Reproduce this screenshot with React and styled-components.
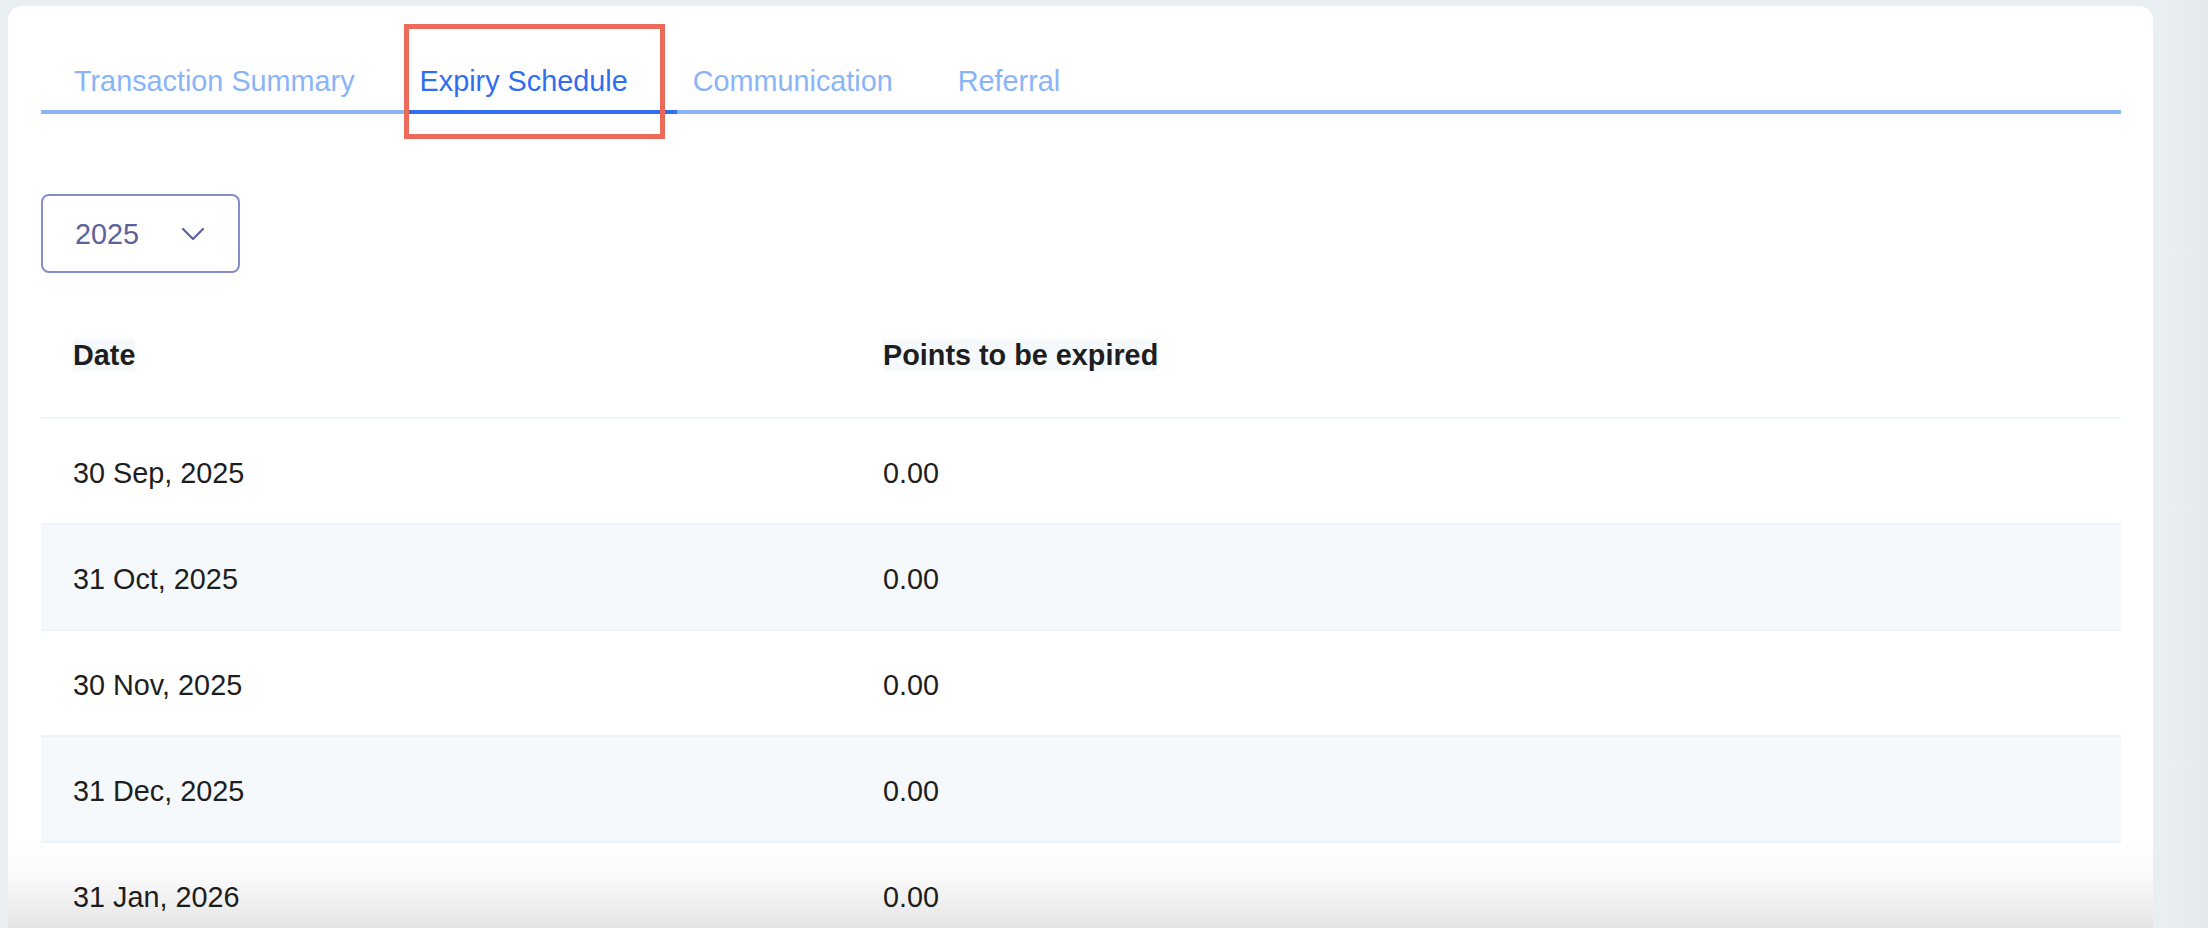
import React from "react";
import styled, { createGlobalStyle } from "styled-components";

const GlobalStyle = createGlobalStyle`
  html, body {
    margin: 0;
    padding: 0;
    height: 100%;
    overflow: hidden;
  }
  body {
    background: linear-gradient(to right, #e9eef1 0, #e9eef1 2170px, #e4e9ec 2208px);
    font-family: "Liberation Sans", Arial, Helvetica, sans-serif;
  }
`;

const Page = styled.div`
  height: 100vh;
  box-sizing: border-box;
  padding: 6px 55px 0 8px;
`;

const Card = styled.div`
  position: relative;
  height: 100%;
  box-sizing: border-box;
  background: #ffffff;
  border-radius: 14px 14px 0 0;
  padding: 55px 32px 0 33px;
  overflow: hidden;
`;

const TabList = styled.div`
  display: flex;
  gap: 4px;
  padding-left: 21px;
  border-bottom: 4px solid #8ab4f8;
`;

const Tab = styled.div`
  font-size: 28.8px;
  line-height: 34px;
  padding: 3px 49px 12px 12px;
  margin-bottom: -4px;
  border-bottom: 4px solid ${(p) => (p.$active ? "#2f6ef0" : "transparent")};
  color: ${(p) => (p.$active ? "#2f6ef0" : "#8ab4f8")};
  white-space: nowrap;
  cursor: pointer;
`;

const Annotation = styled.div`
  position: absolute;
  left: 396px;
  top: 18px;
  width: 261px;
  height: 115px;
  box-sizing: border-box;
  border: 5px solid #ec6a5a;
  pointer-events: none;
`;

const YearSelect = styled.div`
  margin-top: 80px;
  width: 199px;
  height: 79px;
  box-sizing: border-box;
  border: 2px solid #878cca;
  border-radius: 8px;
  display: flex;
  align-items: center;
  gap: 43px;
  padding: 2px 0 0 32px;
  font-size: 28.8px;
  color: #5d6199;
`;

const Table = styled.div`
  margin-top: 16px;
  width: 100%;
`;

const Row = styled.div`
  display: grid;
  grid-template-columns: 810px 1fr;
  align-items: center;
  height: ${(p) => (p.$header ? "130px" : "106px")};
  box-sizing: border-box;
  padding-top: 3px;
  border-bottom: 2px solid #edf3fa;
  background: ${(p) => (p.$shaded ? "#f5f9fc" : "#ffffff")};
`;

const Cell = styled.div`
  padding-left: 32px;
  font-size: 28.8px;
  line-height: 34px;
  color: #1e1e20;
  font-weight: ${(p) => (p.$bold ? 700 : 400)};
`;

const HeadLabel = styled.span`
  background: #f5f9fc;
`;

const BottomFade = styled.div`
  position: absolute;
  left: 0;
  right: 0;
  bottom: 0;
  height: 86px;
  background: linear-gradient(
    to bottom,
    rgba(0, 0, 0, 0) 0%,
    rgba(0, 0, 0, 0.02) 40%,
    rgba(0, 0, 0, 0.1) 100%
  );
  pointer-events: none;
`;

const Chevron = () => (
  <svg width="22" height="13" viewBox="0 0 22 13" fill="none">
    <polyline
      points="1,1 11,11 21,1"
      stroke="#5d6199"
      strokeWidth="2.2"
      strokeLinecap="round"
      strokeLinejoin="round"
    />
  </svg>
);

const tabs = ["Transaction Summary", "Expiry Schedule", "Communication", "Referral"];

const rows = [
  { date: "30 Sep, 2025", points: "0.00" },
  { date: "31 Oct, 2025", points: "0.00" },
  { date: "30 Nov, 2025", points: "0.00" },
  { date: "31 Dec, 2025", points: "0.00" },
  { date: "31 Jan, 2026", points: "0.00" },
];

export default function App() {
  return (
    <>
      <GlobalStyle />
      <Page>
        <Card>
          <TabList>
            {tabs.map((t) => (
              <Tab key={t} $active={t === "Expiry Schedule"}>
                {t}
              </Tab>
            ))}
          </TabList>
          <Annotation />
          <YearSelect>
            <span>2025</span>
            <Chevron />
          </YearSelect>
          <Table>
            <Row $header>
              <Cell $bold>
                <HeadLabel>Date</HeadLabel>
              </Cell>
              <Cell $bold>
                <HeadLabel>Points to be expired</HeadLabel>
              </Cell>
            </Row>
            {rows.map((r, i) => (
              <Row key={r.date} $shaded={i % 2 === 1}>
                <Cell>{r.date}</Cell>
                <Cell>{r.points}</Cell>
              </Row>
            ))}
          </Table>
          <BottomFade />
        </Card>
      </Page>
    </>
  );
}
